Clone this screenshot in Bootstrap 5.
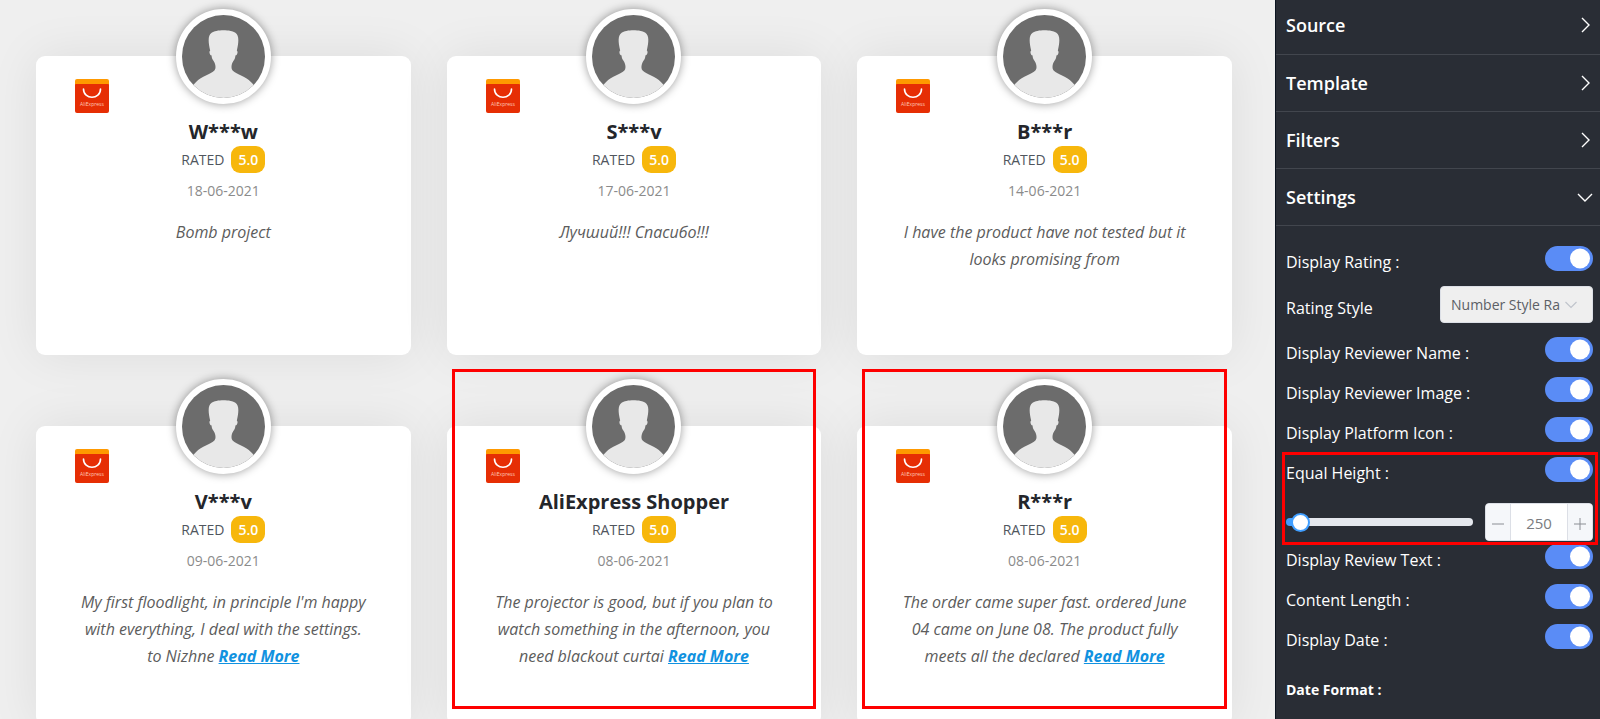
<!DOCTYPE html>
<html lang="en">
<head>
<meta charset="utf-8">
<meta name="viewport" content="width=device-width, initial-scale=1">
<title>Review template editor</title>
<link href="https://cdn.jsdelivr.net/npm/bootstrap@5.3.0/dist/css/bootstrap.min.css" rel="stylesheet">
<style>
  body { font-family: "Open Sans", "Noto Sans", sans-serif; background: #efefef; }
  .preview, .editor { overflow: auto; scrollbar-width: none; }
  .preview::-webkit-scrollbar, .editor::-webkit-scrollbar { display: none; }
  .preview { padding: 56px 43px 24px 36px; }
  .reviews { --bs-gutter-x: 36px; --bs-gutter-y: 71px; margin-top: 0; }
  .reviews > .col { margin-top: 0; margin-bottom: 71px; }

  /* review card */
  .review { min-height: 299px; padding: 0 38px 24px; border-radius: 9px; background: #fff; box-shadow: 0 0 50px rgba(0, 0, 0, .08); }
  .avatar { width: 95px; height: 95px; margin-top: -47px; border: 6px solid #fff; border-radius: 50%; background: #fff; box-shadow: 0 0 10px rgba(0, 0, 0, .4); }
  .platform { top: 23px; left: 39px; }
  .reviewer { margin: 15px 0 0; font: 700 20px/26px "Open Sans", "Noto Sans", sans-serif; color: #24262b; }
  .rated { gap: 7px; margin-top: 1px; font-size: 14px; line-height: 27px; color: #50565e; }
  .score { padding: 0 7px; border-radius: 9px; background: #f7b70c; color: #fff; font-weight: 600; }
  .posted { margin-top: 8px; font-size: 14px; line-height: 20px; color: #8b8b8b; }
  .quote { margin: 18px -8px 0; font-size: 16px; line-height: 27px; font-style: italic; color: #5c5c5c; }
  .quote a { font-weight: 700; color: #1192e0; }
  .marker { border: 3px solid #fe0000; pointer-events: none; }
  .marker-card { top: -57px; left: 5px; right: 5px; height: 340px; }

  /* editor sidebar */
  .editor { width: 325px; background: #292d35; border-left: 1px solid #0b1420; color: #fff; }
  .section-btn { height: 57px; padding: 0 7px 0 10px; border: 0; border-bottom: 1px solid #42464e; background: none; color: #fff; font-size: 18px; font-weight: 600; }
  .section-btn:first-child { height: 55px; padding-bottom: 4px; }
  .settings { padding: 20px 7px 20px 10px; font-size: 16px; }
  .setting { height: 29px; margin-bottom: 11px; }
  .setting label { padding-top: 4px; line-height: 25px; }
  .setting .form-check-input { width: 48px; height: 25px; margin: 0; border: 0; background-color: #5a8cf6; background-size: 25px; background-image: url("data:image/svg+xml,%3Csvg xmlns='http://www.w3.org/2000/svg' viewBox='0 0 25 25'%3E%3Ccircle cx='12' cy='12.5' r='10' fill='%23fff'/%3E%3C/svg%3E") !important; }
  .setting-select { height: 37px; margin-bottom: 14px; }
  .setting-select label { padding-top: 6px; }
  .setting-select .form-select { width: 153px; height: 37px; padding: 0 32px 0 10px; border: 1px solid #dcdfe6; border-radius: 4px; background-color: #efefef; background-size: 14px; background-position: right 14px center; background-image: url("data:image/svg+xml,%3Csvg xmlns='http://www.w3.org/2000/svg' viewBox='0 0 14 14' fill='none' stroke='%23c0c4cc' stroke-width='1.2'%3E%3Cpath d='M1.5 4l5.500 5.500L12.500 4'/%3E%3C/svg%3E"); color: #5c6066; font-size: 14px; }
  .height-group { margin-bottom: 3px; }
  .height-group .setting { margin-bottom: 17px; }
  .marker-height { top: -5px; right: -5px; bottom: -4px; left: -4px; }
  .height-slider { appearance: none; -webkit-appearance: none; flex: 1; min-width: 0; height: 8px; margin: 0 12px 0 0; background: linear-gradient(to right, #409eff 18px, #e4e7ed 18px); border-radius: 4px; }
  .height-slider::-webkit-slider-thumb { -webkit-appearance: none; width: 19px; height: 19px; border: 2px solid #409eff; border-radius: 50%; background: #fff; }
  .stepper { width: 108px; height: 38px; border: 1px solid #dcdfe6; border-radius: 4px; background: #fff; overflow: hidden; }
  .stepper button { width: 24px; padding: 0; border: 0; background: #f5f7fa; color: #606266; }
  .stepper input { min-width: 0; flex: 1; padding: 2px 0 0; border: solid #dcdfe6; border-width: 0 1px; text-align: center; font-size: 15px; color: #7a7c80; }
  .date-format { margin: 27px 0 0; font-size: 14px; line-height: 20px; font-weight: 700; }
</style>
</head>
<body>
<svg class="d-none" aria-hidden="true">
  <symbol id="person" viewBox="0 0 84 84">
    <clipPath id="disc"><circle cx="42" cy="42" r="41.500"/></clipPath>
    <g clip-path="url(#disc)">
      <rect width="84" height="84" fill="#6c6c6c"/>
      <path fill="#e8e8e8" d="M6 84C8 74 11 71 14 68C20 62 29 60 33 56C35 53 33.500 48 31 45C30 43 30 42 30 41C28 41 27 37 28.500 36C26.500 27 26 21 30 18C34 14.500 50 14.500 54 18C58 21 57.500 27 55.500 36C57 37 56 41 54 41C54 42 54 43 53 45C50.500 48 49 53 51 56C55 60 64 62 70 68C73 71 76 74 78 84Z"/>
    </g>
  </symbol>
  <symbol id="aliexpress" viewBox="0 0 34 34">
    <rect width="34" height="20" rx="2" fill="#ff9900"/>
    <path d="M0 6q0-1 1-1h32q1 0 1 1v26q0 2-2 2H2q-2 0-2-2z" fill="#e62e04"/>
    <path d="M8.500 10c0 11 17 11 17 0" fill="none" stroke="#fff" stroke-width="1.600" stroke-linecap="round"/>
    <text x="17" y="26.500" text-anchor="middle" font-size="5" fill="#ffc9b8" font-family="Open Sans, sans-serif">AliExpress</text>
  </symbol>
  <symbol id="chevron-right" viewBox="0 0 16 16"><path d="M5 1l7 7-7 7" fill="none" stroke="#fff" stroke-width="1.400"/></symbol>
  <symbol id="chevron-down" viewBox="0 0 16 16"><path d="M1 5l7 7 7-7" fill="none" stroke="#fff" stroke-width="1.400"/></symbol>
</svg>

<div class="d-flex vh-100">
  <main class="preview flex-grow-1">
    <div class="row row-cols-3 reviews text-center">
      <div class="col"><article class="review position-relative">
        <svg class="platform position-absolute" width="34" height="34"><use href="#aliexpress"/></svg>
        <svg class="avatar"><use href="#person"/></svg>
        <h2 class="reviewer">W***w</h2>
        <div class="rated d-flex justify-content-center"><span>RATED</span><span class="score">5.0</span></div>
        <div class="posted">18-06-2021</div>
        <p class="quote">Bomb project</p>
      </article></div>
      <div class="col"><article class="review position-relative">
        <svg class="platform position-absolute" width="34" height="34"><use href="#aliexpress"/></svg>
        <svg class="avatar"><use href="#person"/></svg>
        <h2 class="reviewer">S***v</h2>
        <div class="rated d-flex justify-content-center"><span>RATED</span><span class="score">5.0</span></div>
        <div class="posted">17-06-2021</div>
        <p class="quote">Лучший!!! Спасибо!!!</p>
      </article></div>
      <div class="col"><article class="review position-relative">
        <svg class="platform position-absolute" width="34" height="34"><use href="#aliexpress"/></svg>
        <svg class="avatar"><use href="#person"/></svg>
        <h2 class="reviewer">B***r</h2>
        <div class="rated d-flex justify-content-center"><span>RATED</span><span class="score">5.0</span></div>
        <div class="posted">14-06-2021</div>
        <p class="quote">I have the product have not tested but it<br>looks promising from</p>
      </article></div>
      <div class="col"><article class="review position-relative">
        <svg class="platform position-absolute" width="34" height="34"><use href="#aliexpress"/></svg>
        <svg class="avatar"><use href="#person"/></svg>
        <h2 class="reviewer">V***v</h2>
        <div class="rated d-flex justify-content-center"><span>RATED</span><span class="score">5.0</span></div>
        <div class="posted">09-06-2021</div>
        <p class="quote">My first floodlight, in principle I'm happy<br>with everything, I deal with the settings.<br>to Nizhne <a href="#">Read More</a></p>
      </article></div>
      <div class="col"><article class="review position-relative">
        <svg class="platform position-absolute" width="34" height="34"><use href="#aliexpress"/></svg>
        <svg class="avatar"><use href="#person"/></svg>
        <h2 class="reviewer">AliExpress Shopper</h2>
        <div class="rated d-flex justify-content-center"><span>RATED</span><span class="score">5.0</span></div>
        <div class="posted">08-06-2021</div>
        <p class="quote">The projector is good, but if you plan to<br>watch something in the afternoon, you<br>need blackout curtai <a href="#">Read More</a></p>
        <div class="marker marker-card position-absolute"></div>
      </article></div>
      <div class="col"><article class="review position-relative">
        <svg class="platform position-absolute" width="34" height="34"><use href="#aliexpress"/></svg>
        <svg class="avatar"><use href="#person"/></svg>
        <h2 class="reviewer">R***r</h2>
        <div class="rated d-flex justify-content-center"><span>RATED</span><span class="score">5.0</span></div>
        <div class="posted">08-06-2021</div>
        <p class="quote">The order came super fast. ordered June<br>04 came on June 08. The product fully<br>meets all the declared <a href="#">Read More</a></p>
        <div class="marker marker-card position-absolute"></div>
      </article></div>
    </div>
  </main>

  <aside class="editor flex-shrink-0">
    <nav>
      <button type="button" class="section-btn d-flex w-100 align-items-center justify-content-between">Source<svg width="16" height="16"><use href="#chevron-right"/></svg></button>
      <button type="button" class="section-btn d-flex w-100 align-items-center justify-content-between">Template<svg width="16" height="16"><use href="#chevron-right"/></svg></button>
      <button type="button" class="section-btn d-flex w-100 align-items-center justify-content-between">Filters<svg width="16" height="16"><use href="#chevron-right"/></svg></button>
      <button type="button" class="section-btn d-flex w-100 align-items-center justify-content-between" aria-expanded="true">Settings<svg width="16" height="16"><use href="#chevron-down"/></svg></button>
    </nav>
    <form class="settings">
      <div class="setting form-switch p-0 d-flex justify-content-between"><label for="rating">Display Rating :</label><input class="form-check-input" type="checkbox" role="switch" id="rating" checked></div>
      <div class="setting-select d-flex justify-content-between align-items-center"><label for="style">Rating Style</label><select class="form-select" id="style"><option>Number Style Ra</option></select></div>
      <div class="setting form-switch p-0 d-flex justify-content-between"><label for="name">Display Reviewer Name :</label><input class="form-check-input" type="checkbox" role="switch" id="name" checked></div>
      <div class="setting form-switch p-0 d-flex justify-content-between"><label for="image">Display Reviewer Image :</label><input class="form-check-input" type="checkbox" role="switch" id="image" checked></div>
      <div class="setting form-switch p-0 d-flex justify-content-between"><label for="icon">Display Platform Icon :</label><input class="form-check-input" type="checkbox" role="switch" id="icon" checked></div>
      <div class="height-group position-relative">
        <div class="setting form-switch p-0 d-flex justify-content-between"><label for="equal">Equal Height :</label><input class="form-check-input" type="checkbox" role="switch" id="equal" checked></div>
        <div class="d-flex align-items-center">
          <input class="height-slider" type="range" min="180" max="1400" value="217" aria-label="Height">
          <div class="stepper d-flex">
            <button type="button" aria-label="Decrease"><svg width="14" height="14"><path d="M1 7h12" stroke="#8b8e94"/></svg></button>
            <input type="text" value="250" aria-label="Height in pixels">
            <button type="button" aria-label="Increase"><svg width="14" height="14"><path d="M1 7h12M7 1v12" stroke="#8b8e94"/></svg></button>
          </div>
        </div>
        <div class="marker marker-height position-absolute"></div>
      </div>
      <div class="setting form-switch p-0 d-flex justify-content-between"><label for="text">Display Review Text :</label><input class="form-check-input" type="checkbox" role="switch" id="text" checked></div>
      <div class="setting form-switch p-0 d-flex justify-content-between"><label for="length">Content Length :</label><input class="form-check-input" type="checkbox" role="switch" id="length" checked></div>
      <div class="setting form-switch p-0 d-flex justify-content-between"><label for="date">Display Date :</label><input class="form-check-input" type="checkbox" role="switch" id="date" checked></div>
      <h3 class="date-format">Date Format :</h3>
    </form>
  </aside>
</div>
<script src="https://cdn.jsdelivr.net/npm/bootstrap@5.3.0/dist/js/bootstrap.bundle.min.js"></script>
</body>
</html>
